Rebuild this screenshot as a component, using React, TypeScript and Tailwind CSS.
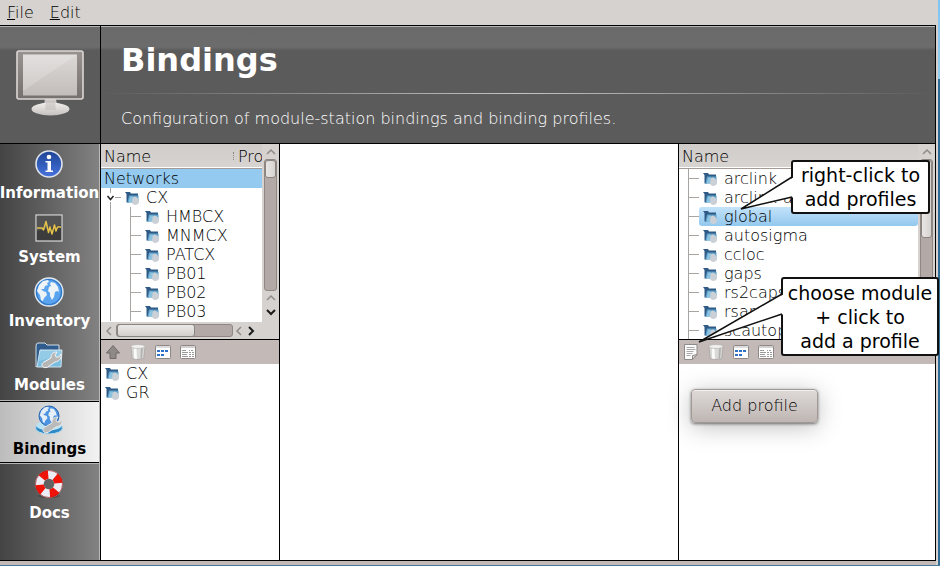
import type { ReactNode } from 'react';

const LIGHT = "font-['DejaVu_Sans_Light','DejaVu_Sans',sans-serif] font-extralight";

function MonitorIcon() {
  return (
    <svg viewBox="0 0 70 68" className="h-[68px] w-[70px]" aria-hidden="true">
      <defs>
        <linearGradient id="screen" x1="0" y1="0" x2="0" y2="1">
          <stop offset="0" stopColor="#dcd9d7" />
          <stop offset="1" stopColor="#c2bdbb" />
        </linearGradient>
        <linearGradient id="bezel" x1="0" y1="0" x2="0" y2="1">
          <stop offset="0" stopColor="#989391" />
          <stop offset="1" stopColor="#76716f" />
        </linearGradient>
        <linearGradient id="foot" x1="0" y1="0" x2="0" y2="1">
          <stop offset="0" stopColor="#f0eeec" />
          <stop offset="1" stopColor="#c6c1be" />
        </linearGradient>
      </defs>
      <path d="M30 50h11l1 6H29z" fill="#cfcac8" />
      <ellipse cx="35.500" cy="60" rx="19" ry="6.500" fill="url(#foot)" />
      <path d="M31 52h9l1 9H30z" fill="#c4bfbc" opacity=".6" />
      <rect x="2" y="2" width="66" height="48" rx="2" fill="url(#bezel)" stroke="#dbd7d5" strokeWidth="1.600" />
      <rect x="8" y="5.500" width="54" height="41" fill="url(#screen)" />
      <path d="M8 5.500h54L8 42z" fill="#fff" opacity=".18" />
    </svg>
  );
}

function InfoIcon() {
  return (
    <svg viewBox="0 0 28 28" className="size-7" aria-hidden="true">
      <defs>
        <linearGradient id="info" x1="0" y1="0" x2="0" y2="1">
          <stop offset="0" stopColor="#1e4494" />
          <stop offset="1" stopColor="#4673de" />
        </linearGradient>
      </defs>
      <circle cx="14" cy="14" r="13" fill="url(#info)" stroke="#dfe3ea" strokeWidth="1.600" />
      <circle cx="14" cy="7" r="2.300" fill="#fff" />
      <path d="M10.500 11h5.500v9.500h2V22h-7.500v-1.500h2v-8h-2z" fill="#fff" />
    </svg>
  );
}

function SystemIcon() {
  return (
    <svg viewBox="0 0 28 28" className="size-7" aria-hidden="true">
      <rect x="1" y="1" width="26" height="26" fill="#3c3c3c" stroke="#d8d8d8" strokeWidth="1.200" />
      <path d="M2 2h24v9L2 17z" fill="#fff" opacity=".12" />
      <path d="M2 14h5l1.500 2L11 7.500l2.500 11L15 13l2 7 2.500-9 1.500 6 1.500-4H26" fill="none" stroke="#e5c34b" strokeWidth="1.500" strokeLinejoin="round" />
    </svg>
  );
}

const LAND_A = 'M5 8l4-4 5-1 1 2-2 1 1 2-3 1-1 3-3 0 2 2 3 1 1 3-3 3-1 3-2-1-1-5-3-4z';
const LAND_B = 'M17 5l4 1 3 4 1 5-2-1-2 1-1 5-2 3-2-4 0-3-2-2 1-4 2-1-1-2z';

function GlobeIcon() {
  return (
    <svg viewBox="0 0 30 30" className="h-[30px] w-[30px]" aria-hidden="true">
      <circle cx="15" cy="15" r="14" fill="#5aa3ef" stroke="#e2e8ee" strokeWidth="1.400" />
      <circle cx="15" cy="15" r="12.500" fill="none" stroke="#2e76c4" strokeWidth="1.200" />
      <path d={LAND_A} fill="#eef3f8" />
      <path d={LAND_B} fill="#eef3f8" />
    </svg>
  );
}

const WRENCH = 'M8 25c-2-2-1-4 1-5l7-4c0-4 2-6 6-6l-2 3 1 2 3 0 2-3c1 4-1 7-6 8l-6 4c-2 2-4 2-6 1z';

function ModulesIcon() {
  return (
    <svg viewBox="0 0 28 28" className="size-7" aria-hidden="true">
      <path d="M1 25V4q0-3 2-3h7l2 2h12v8z" fill="#2f5c8c" stroke="#d3dde6" strokeWidth="1" />
      <path d="M5 8h22l-1 17H2z" fill="#79bde0" stroke="#cfe3ee" strokeWidth="1" />
      <path d="M5 8h22l-.500 5L4 19z" fill="#fff" opacity=".2" />
      <path d={WRENCH} fill="#b6b6b6" stroke="#f4f4f4" strokeWidth="1" />
    </svg>
  );
}

function BindingsIcon() {
  return (
    <svg viewBox="0 0 30 30" className="h-[30px] w-[30px]" aria-hidden="true">
      <ellipse cx="15" cy="23" rx="13.500" ry="6" fill="#2d8cc8" stroke="#b8d9ea" strokeWidth="1" />
      <ellipse cx="15" cy="20.500" rx="12.500" ry="5" fill="#b9e2f5" />
      <circle cx="15" cy="11" r="10" fill="#4b94e2" stroke="#2a66ad" strokeWidth="1" />
      <g transform="translate(3.500 -.500) scale(.77)">
        <path d={LAND_A} fill="#e6eff8" />
        <path d={LAND_B} fill="#e6eff8" />
      </g>
      <path d={WRENCH} transform="translate(2 2)" fill="#bababa" stroke="#e9e9e9" strokeWidth="1" />
    </svg>
  );
}

function DocsIcon() {
  return (
    <svg viewBox="0 0 30 30" className="h-[30px] w-[30px]" aria-hidden="true">
      <ellipse cx="15" cy="27" rx="11" ry="2" fill="#000" opacity=".2" />
      <circle cx="15" cy="15" r="9.500" fill="none" stroke="#ececf4" strokeWidth="8.400" />
      <circle cx="15" cy="15" r="9.500" fill="none" stroke="#ee1208" strokeWidth="8.400" pathLength={80} strokeDasharray="10 10" transform="rotate(-50 15 15)" />
      <circle cx="15" cy="15" r="13.500" fill="none" stroke="#a31a12" strokeWidth=".600" />
    </svg>
  );
}

function StationIcon() {
  return (
    <svg viewBox="0 0 15 14" className="h-[14px] w-[15px] shrink-0" aria-hidden="true">
      <path d="M0 1h5l1 1.500h7V5H4v6.500H1.500V3z" fill="#2f5a86" />
      <path d="M4 4.500h9.500v7H2.500z" fill="#5d9fc8" />
      <path d="M5 5.500h3v6H3.500z" fill="#8cc3e0" />
      <path d="M7.500 9Q7 6 9.500 5.500q4 .500 4.500 5 0 3-3.500 3.500-3.500-.500-3.500-3z" fill="#cbd0d6" />
    </svg>
  );
}

function UpIcon() {
  return (
    <svg viewBox="0 0 16 16" className="size-4" aria-hidden="true">
      <path d="M8 1.500L14.500 9H11v5.500H5V9H1.500z" fill="#8f8a88" stroke="#6f6a68" strokeWidth="1" strokeLinejoin="round" />
    </svg>
  );
}

function TrashIcon() {
  return (
    <svg viewBox="0 0 16 16" className="size-4" aria-hidden="true">
      <path d="M1 2.500h14l-1.300 12q-5.700 2-11.400 0z" fill="#d9d9d8" stroke="#9d9a98" strokeWidth=".600" />
      <path d="M4 4h2.500l.500 11-3-.500z" fill="#fafafa" />
      <path d="M11 4h2l-1 10.500-1.500.500z" fill="#b2b1b0" />
      <ellipse cx="8" cy="2.500" rx="7" ry="2" fill="#efefee" stroke="#b2afad" strokeWidth=".600" />
    </svg>
  );
}

function IconsViewIcon() {
  return (
    <svg viewBox="0 0 16 16" className="size-4" aria-hidden="true">
      <rect x=".500" y="1.500" width="15" height="13" rx="1" fill="#fff" stroke="#8d8886" />
      <rect x="1" y="2" width="14" height="2" fill="#dcdcdc" />
      <path d="M2 6h3v2H2zM6 6h3v2H6zM10 6h3v2h-3zM2 10h3v2H2zM6 10h3v2H6z" fill="#2e70c8" />
    </svg>
  );
}

function DetailsViewIcon() {
  return (
    <svg viewBox="0 0 16 16" className="size-4" aria-hidden="true">
      <rect x=".500" y="1.500" width="15" height="13" rx="1" fill="#fff" stroke="#8d8886" />
      <rect x="1" y="2" width="14" height="2" fill="#d2d2d2" />
      <path d="M2 6.500h4M2 8.500h6M2 10.500h5M2 12.500h6M9 6.500h1M11 6.500h2M9 8.500h2M12 8.500h2M9 10.500h2M12 10.500h2M9 12.500h2M12 12.500h2" stroke="#9a9a9a" />
    </svg>
  );
}

function NoteIcon() {
  return (
    <svg viewBox="0 0 16 16" className="size-4" aria-hidden="true">
      <path d="M1.500 .500h12.500v10L9.500 15.500h-8z" fill="#fbfbfb" stroke="#8f8b89" />
      <path d="M14 10.500L9.500 15.500v-4z" fill="#d8d8d8" stroke="#8f8b89" strokeLinejoin="round" />
      <path d="M3.500 3.500h8M3.500 5.500h9M3.500 7.500h7M3.500 9.500h6M3.500 11.500h4" stroke="#a9a9a9" />
    </svg>
  );
}

function Chevron({ dir, dark = false }: { dir: 'up' | 'down' | 'left' | 'right'; dark?: boolean }) {
  const paths = { up: 'M1 7l4-4 4 4', down: 'M1 3l4 4 4-4', left: 'M7 1L3 5l4 4', right: 'M3 1l4 4-4 4' };
  return (
    <button type="button" aria-label={`Scroll ${dir}`} className="flex h-[14px] w-3 shrink-0 items-center justify-center">
      <svg viewBox="0 0 10 10" className="size-[10px]" aria-hidden="true">
        <path d={paths[dir]} fill="none" stroke={dark ? '#1c1c1c' : '#8f8b88'} strokeWidth={dark ? 2 : 1.5} />
      </svg>
    </button>
  );
}

const NAV: { label: string; icon: ReactNode }[] = [
  { label: 'Information', icon: <InfoIcon /> },
  { label: 'System', icon: <SystemIcon /> },
  { label: 'Inventory', icon: <GlobeIcon /> },
  { label: 'Modules', icon: <ModulesIcon /> },
  { label: 'Bindings', icon: <BindingsIcon /> },
  { label: 'Docs', icon: <DocsIcon /> },
];

function Sidebar() {
  return (
    <nav className="flex w-[100px] shrink-0 flex-col gap-[2px] overflow-hidden border-r border-[#b9b9b9] bg-linear-to-r from-[#444] to-[#828282] pt-px">
      {NAV.map(({ label, icon }) => {
        const active = label === 'Bindings';
        return (
          <button
            key={label}
            type="button"
            aria-current={active ? 'page' : undefined}
            className={`flex h-[62px] flex-col items-center gap-1 border-y pt-1 font-['DejaVu_Sans',sans-serif] text-[15px] leading-[22px] font-bold ${
              active
                ? 'border-black bg-linear-to-r from-[#bcbcbc] to-[#f2f2f2] text-black shadow-[0_1px_0_#b5b5b5,0_-1px_0_#b5b5b5]'
                : 'border-transparent text-white'
            }`}
          >
            <span className="flex h-7 items-center justify-center pr-[2px]">{icon}</span>
            <span>{label}</span>
          </button>
        );
      })}
    </nav>
  );
}

function Branch() {
  return (
    <span className="flex w-[15px] shrink-0 items-center self-stretch border-l border-[#a8a4a1]">
      <span className="h-px w-[10px] bg-[#a8a4a1]" />
    </span>
  );
}

function Toolbar({ first }: { first: ReactNode }) {
  const tools = [
    { name: 'Delete', icon: <TrashIcon /> },
    { name: 'Icon view', icon: <IconsViewIcon /> },
    { name: 'Detail view', icon: <DetailsViewIcon /> },
  ];
  return (
    <div className="flex h-6 shrink-0 items-center bg-[#c3b9b6]">
      {first}
      {tools.map((t) => (
        <button key={t.name} type="button" aria-label={t.name} className="flex w-[25px] justify-center">
          {t.icon}
        </button>
      ))}
    </div>
  );
}

function ColumnHeader({ children }: { children: ReactNode }) {
  return (
    <div className="flex h-[25px] shrink-0 items-center overflow-hidden border-b border-[#a39b98] bg-linear-to-b from-[#d0ccc9] to-[#d8d4d1] pl-[3px] shadow-[inset_0_-1px_0_#fff]">
      {children}
    </div>
  );
}

const STATIONS = ['HMBCX', 'MNMCX', 'PATCX', 'PB01', 'PB02', 'PB03'];
const MODULES = ['arclink', 'arclink-access', 'global', 'autosigma', 'ccloc', 'gaps', 'rs2caps', 'rsarch', 'scautopick'];

function NetworksPanel() {
  return (
    <section className="flex w-[180px] shrink-0 flex-col border-x border-black bg-white">
      <div className="flex h-[195px] flex-col bg-[#d6d2cf]">
        <div className="flex min-h-0 flex-1">
          <div className="min-w-0 flex-1 overflow-hidden bg-white">
            <ColumnHeader>
              <span className="flex-1">Name</span>
              <span className="mr-1 h-2 border-l border-dotted border-[#8a8683]" />
              <span className="w-6">Pro</span>
            </ColumnHeader>
            <ul role="tree">
              <li role="treeitem" className="h-[19px] bg-[#94caef] pl-[3px]">Networks</li>
              <li role="treeitem" className="flex h-[19px] items-center pl-[5px]">
                <svg viewBox="0 0 18 19" className="mr-px h-[19px] w-[18px] shrink-0" aria-hidden="true">
                  <path d="M4.500 0v5M4.500 14v5M9 9.500h6" stroke="#a8a4a1" />
                  <path d="M1.500 8l3 3.500 3-3.500" fill="none" stroke="#222" strokeWidth="1.500" />
                </svg>
                <StationIcon />
                <span className="pl-[6px]">CX</span>
              </li>
              {STATIONS.map((s) => (
                <li key={s} role="treeitem" className="flex h-[19px] items-center pl-[9px]">
                  <span className="w-5 self-stretch border-l border-[#a8a4a1]" />
                  <Branch />
                  <StationIcon />
                  <span className="pl-[6px]">{s}</span>
                </li>
              ))}
            </ul>
          </div>
          <div className="flex w-[17px] flex-col items-center pt-px">
            <Chevron dir="up" />
            <div className="w-[13px] flex-1 rounded-[3px] border border-[#8f8784] bg-[#b3aaa7]">
              <div className="h-[18px] rounded-[3px] border border-[#8a8481] bg-linear-to-r from-[#e8e6e5] to-[#d6d2d0]" />
            </div>
            <Chevron dir="up" />
            <Chevron dir="down" dark />
            <div className="h-[3px]" />
          </div>
        </div>
        <div className="flex h-[17px] items-center pl-[2px]">
          <Chevron dir="left" />
          <div className="ml-px h-[13px] w-[117px] rounded-[3px] border border-[#8f8784] bg-[#b3aaa7]">
            <div className="-mt-px h-[13px] w-[78px] rounded-[3px] border border-[#8a8481] bg-linear-to-b from-[#eceae9] to-[#d3cfcd]" />
          </div>
          <Chevron dir="left" />
          <Chevron dir="right" dark />
        </div>
      </div>
      <div className="border-t border-black">
        <Toolbar
          first={
            <button type="button" aria-label="Up" className="flex w-6 justify-center">
              <UpIcon />
            </button>
          }
        />
      </div>
      <ul>
        {['CX', 'GR'].map((n) => (
          <li key={n} className="flex h-[19px] items-center pl-1">
            <StationIcon />
            <span className="pl-[6px]">{n}</span>
          </li>
        ))}
      </ul>
    </section>
  );
}

function Callout({ className, tail, children }: { className: string; tail: ReactNode; children: ReactNode }) {
  return (
    <div className={`absolute z-10 rounded-[3px] border-2 border-[#111] bg-white text-center font-['DejaVu_Sans',sans-serif] text-[19px] leading-6 font-normal whitespace-nowrap text-black ${className}`}>
      {tail}
      {children}
    </div>
  );
}

function ProfilesPanel() {
  return (
    <section className="relative flex w-[258px] shrink-0 flex-col border-x border-black bg-white">
      <div className="flex h-[195px]">
        <div className="min-w-0 flex-1 overflow-hidden">
          <ColumnHeader>Name</ColumnHeader>
          <ul role="tree">
            {MODULES.map((m) => (
              <li key={m} role="treeitem" className="flex h-[19px] items-center pl-[9px]">
                <span className="flex w-[11px] shrink-0 items-center self-stretch border-l border-[#a8a4a1]">
                  <span className="h-px flex-1 bg-[#a8a4a1]" />
                </span>
                <span
                  className={`flex h-[19px] flex-1 items-center rounded-[3px] pl-1 ${
                    m === 'global' ? 'bg-linear-to-b from-[#c3e3fa] to-[#93c8ee]' : ''
                  }`}
                >
                  <StationIcon />
                  <span className="pl-[6px]">{m}</span>
                </span>
              </li>
            ))}
          </ul>
        </div>
        <div className="flex w-[17px] flex-col items-center bg-[#d6d2cf] pt-px">
          <Chevron dir="up" />
          <div className="w-[13px] flex-1 rounded-[3px] border border-[#8f8784] bg-[#b3aaa7]">
            <div className="h-[78px] rounded-[3px] border border-[#8a8481] bg-linear-to-r from-[#e8e6e5] to-[#d6d2d0]" />
          </div>
          <Chevron dir="up" />
          <Chevron dir="down" dark />
        </div>
      </div>
      <div className="border-t border-black">
        <Toolbar
          first={
            <button type="button" aria-label="Add profile to module" className="flex w-6 justify-center">
              <NoteIcon />
            </button>
          }
        />
      </div>
      <div className="px-3 pt-[25px]">
        <button
          type="button"
          className="h-[34px] w-[127px] rounded-[4px] border border-[#a09996] bg-linear-to-b from-[#dedad8] to-[#bfb6b3] pb-px shadow-[inset_0_1px_0_#f3f1f0,0_1px_3px_rgba(0,0,0,0.5),0_4px_24px_rgba(0,0,0,0.25)]"
        >
          Add profile
        </button>
      </div>
      <Callout
        className="top-4 right-[5px] w-[139px] py-px"
        tail={
          <svg viewBox="0 0 54 36" className="absolute top-[13px] -left-[53px] h-9 w-[54px]" aria-hidden="true">
            <path d="M54 2L1 34l53-12z" fill="#fff" />
            <path d="M52 2L1 34l51-12" fill="none" stroke="#111" strokeWidth="1.500" />
          </svg>
        }
      >
        right-click to
        <br />
        add profiles
      </Callout>
      <Callout
        className="top-[133px] -right-1 w-[158px] pt-[2px] pb-px"
        tail={
          <svg viewBox="0 0 86 52" className="absolute top-[13px] -left-[85px] h-[52px] w-[86px]" aria-hidden="true">
            <path d="M86 2L1 50l85-28z" fill="#fff" />
            <path d="M84 2L1 50l83-28" fill="none" stroke="#111" strokeWidth="1.500" />
          </svg>
        }
      >
        choose module
        <br />+ click to
        <br />
        add a profile
      </Callout>
    </section>
  );
}

export default function App() {
  return (
    <div className={`flex min-h-screen w-full flex-col border-b border-[#41799f] bg-[#c3b9b6] text-base leading-[19px] text-black ${LIGHT}`}>
      <div className="flex flex-1">
        <div className="flex min-w-0 flex-1 flex-col pb-1">
          <div className="flex h-[25px] shrink-0 items-center gap-4 bg-[#d6d2cf] pl-[7px]">
            <button type="button"><u>F</u>ile</button>
            <button type="button"><u>E</u>dit</button>
          </div>
          <header className="flex h-[118px] shrink-0 border-t border-r border-black bg-linear-to-b from-[#6a6a6a] from-0% via-[#6c6c6c] via-[18%] to-[#5b5b5b] to-[21%] text-white shadow-[inset_0_1px_0_#b5b5b5]">
            <div className="flex w-[101px] shrink-0 items-center justify-center border-r border-black pr-px pb-[3px]">
              <MonitorIcon />
            </div>
            <div className="flex-1 pt-[14px]">
              <h1 className="pl-5 font-['DejaVu_Sans',sans-serif] text-[32px] leading-10 font-bold">Bindings</h1>
              <div className="mt-[13px] h-px bg-linear-to-r from-transparent via-[#c4c4c4] to-transparent" />
              <p className="pt-[15px] pl-5">Configuration of module-station bindings and binding profiles.</p>
            </div>
          </header>
          <main className="flex flex-1 border-y border-black bg-white">
            <Sidebar />
            <NetworksPanel />
            <div className="flex-1" />
            <ProfilesPanel />
          </main>
        </div>
        <div className="w-[2px] bg-[#d6d2cf]" />
        <div className="w-[2px] bg-linear-to-b from-[#7fc4f2] from-0% via-[#93cdf2] via-[14%] to-[#2f6d96] to-[14%]" />
      </div>
    </div>
  );
}
